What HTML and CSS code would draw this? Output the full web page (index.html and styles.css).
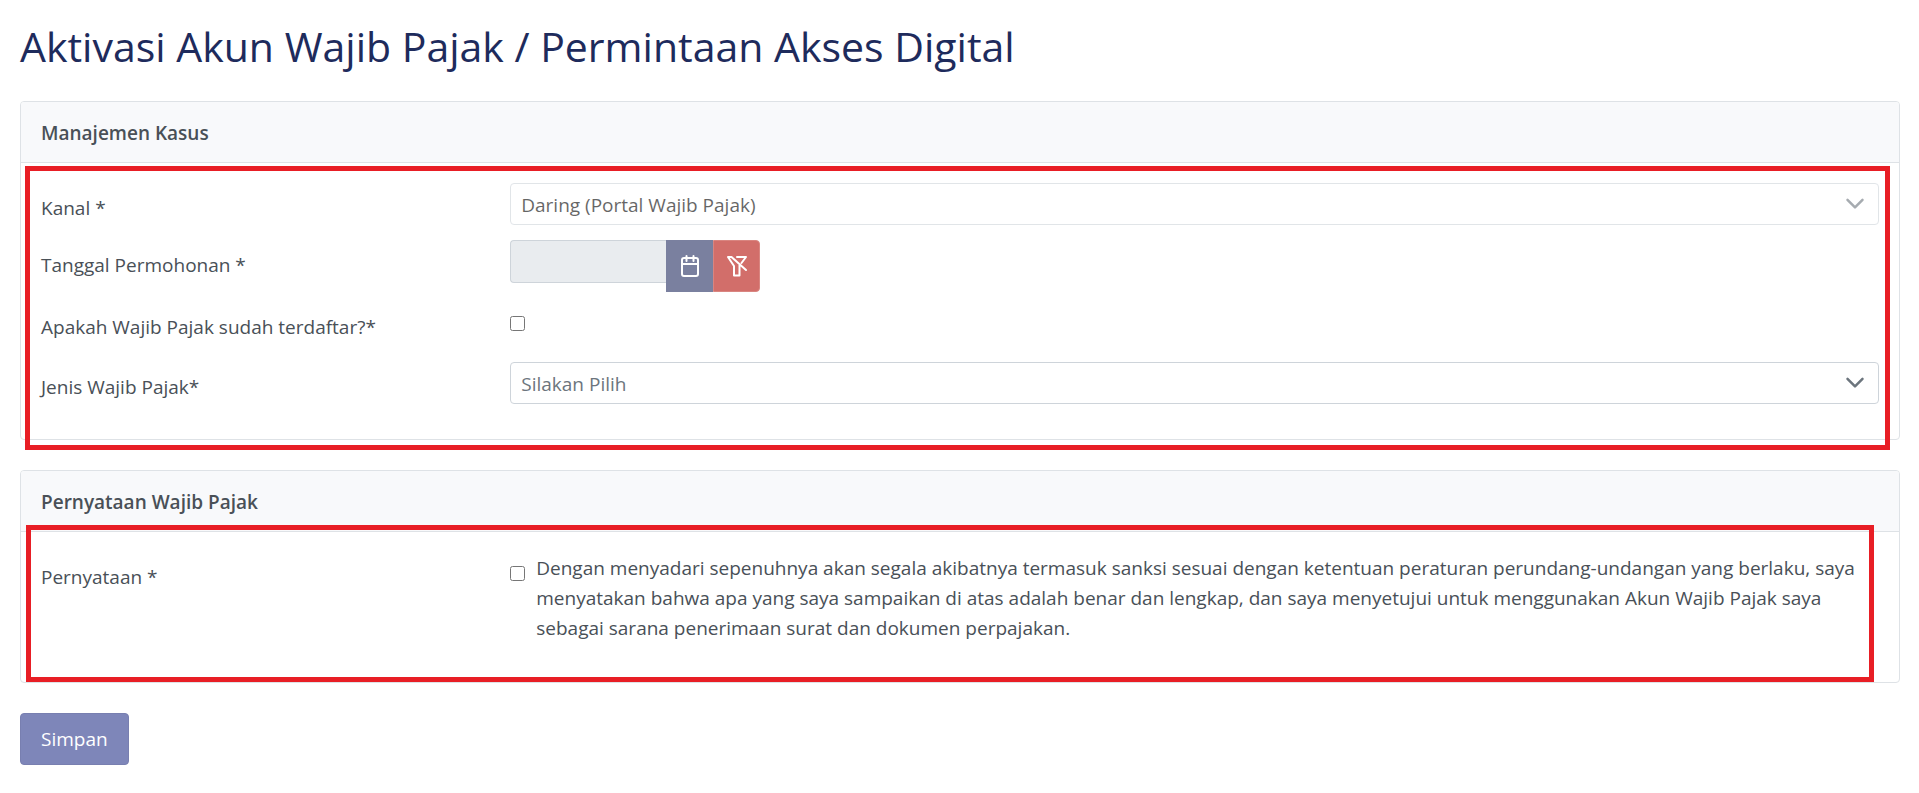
FILE: index.html
```html
<!DOCTYPE html>
<html lang="id">
<head>
<meta charset="UTF-8">
<meta name="viewport" content="width=device-width, initial-scale=1.0">
<title>Aktivasi Akun Wajib Pajak</title>
<link rel="stylesheet" href="styles.css">
</head>
<body>

<h1>Aktivasi Akun Wajib Pajak / Permintaan Akses Digital</h1>

<form id="activation-form">
  <section class="panel">
    <h2>Manajemen Kasus</h2>
    <div class="panel-body">
      <div class="row">
        <label for="channel">Kanal *</label>
        <div class="dropdown disabled">
          <select id="channel" name="channel" disabled>
            <option>Daring (Portal Wajib Pajak)</option>
          </select>
          <svg class="chevron" viewBox="0 0 24 24" aria-hidden="true"><path d="M3 7l9 9 9-9"/></svg>
        </div>
      </div>

      <div class="row">
        <label for="request-date">Tanggal Permohonan *</label>
        <div class="date-group">
          <input type="text" id="request-date" name="request-date" disabled>
          <button type="button" class="btn-date" aria-label="Pilih tanggal" disabled>
            <svg class="icon" viewBox="0 0 22 22" aria-hidden="true">
              <rect x="3" y="3" width="16" height="18" rx="2"/>
              <path d="M3 9h16M7.500 1v5M14.500 1v5"/>
            </svg>
          </button>
          <button type="button" class="btn-clear" aria-label="Hapus tanggal" disabled>
            <svg class="icon" viewBox="0 0 22 22" aria-hidden="true">
              <path d="M11 2h9l-4.500 6M20 15L5.500 2H2l6 9v9.500h5.500V10"/>
            </svg>
          </button>
        </div>
      </div>

      <div class="row">
        <label for="registered">Apakah Wajib Pajak sudah terdaftar?*</label>
        <div class="check">
          <input type="checkbox" id="registered" name="registered">
        </div>
      </div>

      <div class="row">
        <label for="taxpayer-type">Jenis Wajib Pajak*</label>
        <div class="dropdown">
          <select id="taxpayer-type" name="taxpayer-type">
            <option value="">Silakan Pilih</option>
          </select>
          <svg class="chevron" viewBox="0 0 24 24" aria-hidden="true"><path d="M3 7l9 9 9-9"/></svg>
        </div>
      </div>
    </div>
    <div class="highlight highlight-case"></div>
  </section>

  <section class="panel">
    <h2>Pernyataan Wajib Pajak</h2>
    <div class="panel-body">
      <div class="row">
        <label for="statement">Pernyataan *</label>
        <div class="check statement">
          <input type="checkbox" id="statement" name="statement" aria-describedby="statement-text">
          <p id="statement-text">Dengan menyadari sepenuhnya akan segala akibatnya termasuk sanksi sesuai dengan ketentuan peraturan perundang-undangan yang berlaku, saya menyatakan bahwa apa yang saya sampaikan di atas adalah benar dan lengkap, dan saya menyetujui untuk menggunakan Akun Wajib Pajak saya sebagai sarana penerimaan surat dan dokumen perpajakan.</p>
        </div>
      </div>
    </div>
    <div class="highlight highlight-statement"></div>
  </section>

  <button type="submit" class="btn-save" disabled>Simpan</button>
</form>

</body>
</html>
```
FILE: styles.css
```css
* {
  box-sizing: border-box;
}

body {
  margin: 0;
  padding: 20px 19px 20px 20px;
  font-family: "Open Sans", "Noto Sans", sans-serif;
  font-size: 19px;
  line-height: 30px;
  color: #495057;
  background-color: #fff;
}

h1 {
  margin: 0 0 28px;
  font-size: 41px;
  font-weight: 400;
  line-height: 53px;
  color: #1e2b5c;
}

.panel {
  position: relative;
  margin-bottom: 30px;
  border: 1px solid #dee2e6;
  border-radius: 4px;
}

.panel h2 {
  margin: 0;
  padding: 16px 20px 14px;
  font-size: 19px;
  font-weight: 600;
  line-height: 30px;
  background-color: #f8f9fb;
  border-bottom: 1px solid #dee2e6;
  border-radius: 3px 3px 0 0;
}

.panel-body {
  padding: 20px;
}

.row {
  display: grid;
  grid-template-columns: 1fr 3fr;
  column-gap: 13px;
  align-items: start;
  margin-bottom: 10px;
}

.row label {
  padding-top: 10px;
}

/* dropdowns */
.dropdown {
  position: relative;
  margin-bottom: 5px;
}

.dropdown select {
  display: block;
  width: 100%;
  height: 42px;
  padding: 1px 50px 0 10px;
  font: inherit;
  color: #6c757d;
  background-color: #fff;
  border: 1px solid #ced4da;
  border-radius: 4px;
  appearance: none;
}

.dropdown.disabled {
  opacity: 0.6;
}

.dropdown.disabled select {
  color: #000;
  opacity: 1;
}

.chevron {
  position: absolute;
  top: 11px;
  right: 14px;
  width: 20px;
  height: 20px;
  fill: none;
  stroke: #6c757d;
  stroke-width: 3;
  stroke-linecap: round;
  stroke-linejoin: round;
  pointer-events: none;
}

/* date field */
.date-group {
  display: flex;
  align-items: flex-start;
}

.date-group input {
  width: 156px;
  height: 43px;
  padding: 0 10px;
  font: inherit;
  background-color: #e9ecef;
  border: 1px solid #ced4da;
  border-right: none;
  border-radius: 4px 0 0 4px;
}

.date-group button {
  display: flex;
  align-items: center;
  justify-content: center;
  width: 47px;
  height: 52px;
  padding: 0;
  border: none;
}

.btn-date {
  background-color: #7a809f;
}

.date-group .btn-clear {
  background-color: #d26e6a;
  border: 1px solid #d98580;
  border-radius: 0 4px 4px 0;
}

.icon {
  width: 22px;
  height: 22px;
  fill: none;
  stroke: #fff;
  stroke-width: 2;
  stroke-linecap: round;
  stroke-linejoin: round;
}

/* checkboxes */
.check {
  display: flex;
  align-items: flex-start;
  gap: 11px;
  min-height: 50px;
}

.check input {
  flex: none;
  width: 15px;
  height: 15px;
  margin: 14px 0 0;
}

.statement {
  padding-bottom: 9px;
}

.statement p {
  margin: 0;
  padding-top: 1px;
}

/* red frames around the parts to fill in */
.highlight {
  position: absolute;
  border: 5px solid #e81e25;
  pointer-events: none;
}

.highlight-case {
  top: 64px;
  right: 9px;
  bottom: -11px;
  left: 4px;
}

.highlight-statement {
  top: 54px;
  right: 25px;
  bottom: 0;
  left: 5px;
}

.btn-save {
  height: 52px;
  padding: 0 20px;
  font: inherit;
  color: #fff;
  background-color: #7e86b9;
  border: 1px solid #787fb0;
  border-radius: 4px;
}
```
